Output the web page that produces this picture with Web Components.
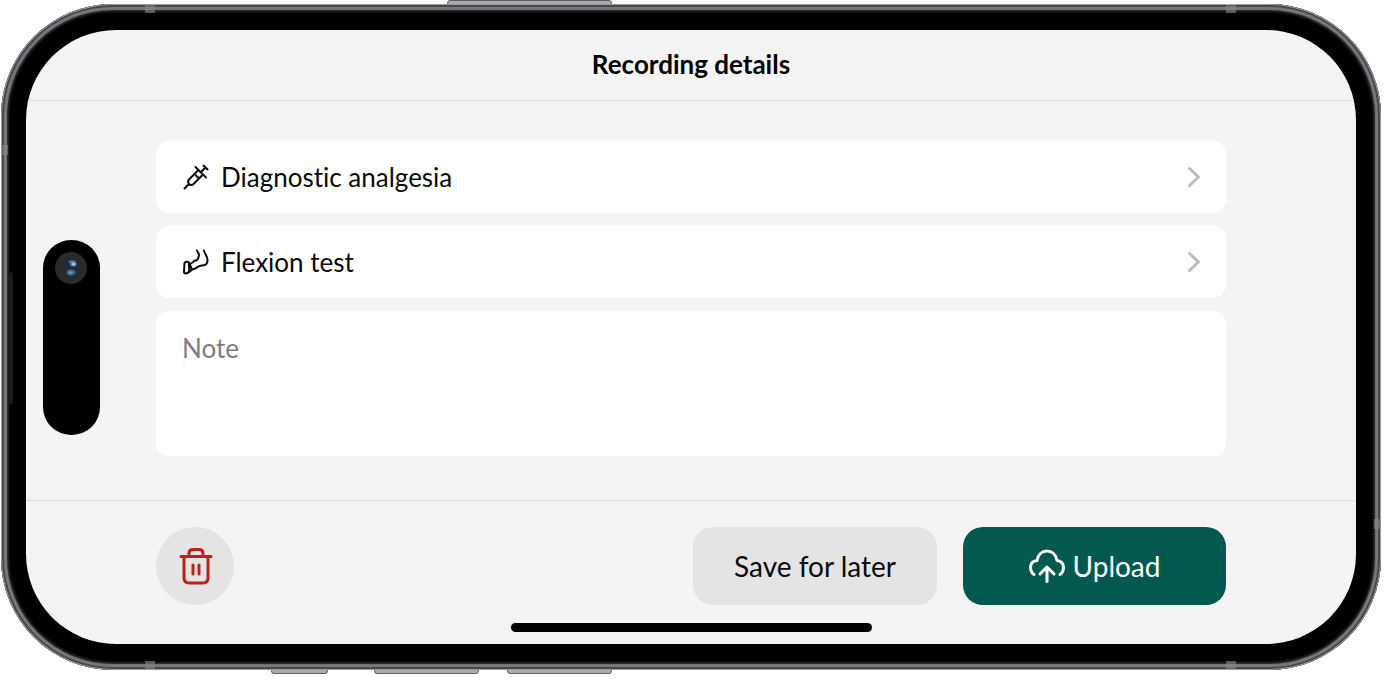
<!DOCTYPE html>
<html lang="en">
<head>
<meta charset="utf-8">
<meta name="viewport" content="width=device-width, initial-scale=1">
<title>Recording details</title>
<style>
  body {
    margin: 0;
    background: #fff;
    color: #0b0b0b;
    font-family: Lato, "Liberation Sans", sans-serif;
    font-variant-ligatures: none;
  }
</style>
</head>
<body>

<phone-frame>
  <recording-details>
    <detail-row>
      <svg slot="icon" viewBox="0 0 26 26" width="26" height="26" fill="none" stroke="currentColor" stroke-width="2" stroke-linecap="round" stroke-linejoin="round" aria-hidden="true">
        <path d="M1.500 24.500L6 20M12.500 3L23 13.500M20.500 1.500l4 4M22.500 3.500L18.500 7.500M15.500 6L6 15.500c-1.300 1.500-1 3.300 0 4.500 1.200 1 3 1.300 4.500 0L20 10.500M13 11.500l2 2"/>
      </svg>
      Diagnostic analgesia
    </detail-row>
    <detail-row>
      <svg slot="icon" viewBox="0 0 26 26" width="26" height="26" fill="none" stroke="currentColor" stroke-width="2" stroke-linecap="round" stroke-linejoin="round" aria-hidden="true">
        <path d="M14 1.500c.8 2 2.300 3 2 5-.3 2-1.200 4-2.500 4.800-1.500.5-2.500.2-3.500 1.700-.8 1-1.800 1.500-3 1.700M21 1.500c.3 3 3.500 5.500 3.500 9.500 0 3.500-1.500 5-4 5.300-3 .4-4.500.2-6 1.700-1.500 1.500-3 1.700-5 2.500"/>
        <path d="M1.500 14c1-1 3-1.300 4.300-.8 1.200 2 2.200 4.500 3 7.300-1.500 2.200-3.800 3.700-6.300 4-1 .1-1.500-.5-1.500-1.500zM6 13.500c-.6 3 .8 6 0 9"/>
      </svg>
      Flexion test
    </detail-row>
    <note-field></note-field>

    <icon-button slot="actions" label="Delete recording"></icon-button>
    <action-button slot="actions">Save for later</action-button>
    <action-button slot="actions" primary>
      <svg slot="icon" viewBox="0 0 36 34" width="36" height="34" fill="none" stroke="currentColor" stroke-width="3" stroke-linecap="round" stroke-linejoin="round" aria-hidden="true">
        <path d="M5 25.500C2.800 24 1.500 21.500 1.500 18.500c0-4 2.700-6.500 6.500-7C9 5.500 13 2 18 2s9 3.500 10 9.500c3.800.5 6.500 3 6.500 7 0 3-1.300 5.500-3.500 7M18 32.500V18M11 25l7-7 7 7"/>
      </svg>
      Upload
    </action-button>
  </recording-details>
</phone-frame>

<script>
class PhoneFrame extends HTMLElement {

  constructor() {
    super();
    this.attachShadow({ mode: "open" });
  }

  getTemplate() {
    const template = document.createElement("template");

    template.innerHTML = `
      ${this.getStyles()}
      <i class="key top"></i>
      <i class="key mute"></i>
      <i class="key up"></i>
      <i class="key down"></i>
      <div class="body">
        <i class="band b1"></i><i class="band b2"></i>
        <i class="band b3"></i><i class="band b4"></i>
        <i class="band side left"></i><i class="band side right"></i>
        <i class="sensor"></i>
        <div class="screen">
          <slot></slot>
        </div>
        <div class="island">
          <svg viewBox="0 0 32 32" width="32" height="32" aria-hidden="true">
            <circle cx="16" cy="16" r="16" fill="#2a2b2d"/>
            <circle cx="16" cy="16" r="9" fill="#222b35"/>
            <path d="M13 10c3-3 8-2 8.500 1.500S18 15 16 14s1-3-3-4z" fill="#56789a"/>
            <ellipse cx="18.500" cy="12" rx="2" ry="1.500" fill="#a3c6df"/>
            <ellipse cx="16" cy="20.500" rx="4.500" ry="3" fill="#466784"/>
            <ellipse cx="15.500" cy="20.500" rx="2" ry="1.300" fill="#7095b3"/>
          </svg>
        </div>
        <div class="home"></div>
      </div>
    `;

    return template;
  }

  getStyles() {
    return `
      <style>
        :host {
          display: flex;
          position: relative;
          box-sizing: border-box;
          min-height: 100vh;
          padding: 4px 17px 12px 1px;
        }
        .body {
          position: relative;
          flex: 1;
          display: flex;
          padding: 26px 25px;
          border-radius: 112px;
          background: #000;
          box-shadow:
            inset 0 0 0 1px #9a9b9d,
            inset 0 0 0 3px #46484b,
            inset 0 0 1px 6px #77797c,
            inset 0 0 2px 8px #252628;
        }
        .screen {
          flex: 1;
          display: flex;
          overflow: hidden;
          border-radius: 90px;
          background: #f4f4f4;
        }
        .island {
          position: absolute;
          left: 42px;
          top: 236px;
          box-sizing: border-box;
          width: 57px;
          height: 195px;
          padding: 12px;
          border-radius: 28px;
          background: #000;
        }
        .home {
          position: absolute;
          left: 50%;
          bottom: 38px;
          width: 361px;
          height: 9px;
          margin-left: -180px;
          border-radius: 5px;
          background: #000;
        }
        .key {
          position: absolute;
          box-sizing: border-box;
          height: 6px;
          border: 1px solid #5c5e60;
          border-radius: 3px;
          background: #a9abad;
        }
        .top { left: 447px; top: 0; width: 165px; }
        .mute { left: 271px; bottom: 8px; width: 57px; }
        .up { left: 374px; bottom: 8px; width: 105px; }
        .down { left: 507px; bottom: 8px; width: 105px; }
        .band {
          position: absolute;
          width: 10px;
          height: 8px;
          background: #88888a99;
        }
        .b1, .b3 { left: 144px; }
        .b2, .b4 { right: 145px; }
        .b1, .b2 { top: 1px; }
        .b3, .b4 { bottom: 1px; }
        .side { width: 7px; height: 10px; }
        .left { left: 0; top: 141px; }
        .right { right: 0; bottom: 141px; }
        .sensor {
          position: absolute;
          left: 8px;
          top: 268px;
          width: 4px;
          height: 132px;
          border-radius: 2px;
          background: #1b1b1c;
        }
      </style>
    `;
  }

  connectedCallback() {
    this.shadowRoot.appendChild(this.getTemplate().content.cloneNode(true));
  }

}

class RecordingDetails extends HTMLElement {

  constructor() {
    super();
    this.attachShadow({ mode: "open" });
  }

  getTemplate() {
    const template = document.createElement("template");

    template.innerHTML = `
      ${this.getStyles()}
      <header>
        <h1>Recording details</h1>
      </header>
      <main>
        <slot></slot>
      </main>
      <footer>
        <slot name="actions"></slot>
      </footer>
    `;

    return template;
  }

  getStyles() {
    return `
      <style>
        :host {
          flex: 1;
          display: flex;
          flex-direction: column;
        }
        header {
          padding: 17px 130px 19px;
          border-bottom: 1px solid #dcdcdc;
        }
        h1 {
          margin: 0;
          font-size: 26px;
          line-height: 34px;
          text-align: center;
          color: #000;
        }
        main {
          flex: 1;
          display: flex;
          flex-direction: column;
          gap: 13px;
          padding: 40px 130px 44px;
        }
        footer {
          display: flex;
          gap: 26px;
          padding: 26px 130px 39px;
          border-top: 1px solid #dcdcdc;
        }
      </style>
    `;
  }

  connectedCallback() {
    this.shadowRoot.appendChild(this.getTemplate().content.cloneNode(true));
  }

}

class DetailRow extends HTMLElement {

  constructor() {
    super();
    this.attachShadow({ mode: "open" });
  }

  getTemplate() {
    const template = document.createElement("template");

    template.innerHTML = `
      ${this.getStyles()}
      <button type="button">
        <slot name="icon"></slot>
        <span><slot></slot></span>
        <svg viewBox="0 0 14 22" width="14" height="22" fill="none" stroke="#bcbcbc" stroke-width="3" stroke-linecap="round" stroke-linejoin="round" aria-hidden="true">
          <path d="M2.500 2.500l9 8.500-9 8.500"/>
        </svg>
      </button>
    `;

    return template;
  }

  getStyles() {
    return `
      <style>
        :host {
          display: block;
        }
        button {
          display: flex;
          align-items: center;
          gap: 12px;
          width: 100%;
          min-height: 72px;
          padding: 0 25px 0 27px;
          border: 0;
          border-radius: 13px;
          background: #fff;
          color: inherit;
          font: inherit;
          font-size: 26px;
          font-variant-ligatures: none;
          line-height: 34px;
          text-align: left;
        }
        span {
          flex: 1;
        }
      </style>
    `;
  }

  connectedCallback() {
    this.shadowRoot.appendChild(this.getTemplate().content.cloneNode(true));
  }

}

class NoteField extends HTMLElement {

  constructor() {
    super();
    this.attachShadow({ mode: "open" });
  }

  getTemplate() {
    const template = document.createElement("template");

    template.innerHTML = `
      ${this.getStyles()}
      <textarea placeholder="Note" aria-label="Note"></textarea>
    `;

    return template;
  }

  getStyles() {
    return `
      <style>
        :host {
          flex: 1;
          display: flex;
        }
        textarea {
          flex: 1;
          box-sizing: border-box;
          min-height: 145px;
          padding: 20px 26px;
          border: 0;
          border-radius: 13px;
          background: #fff;
          color: inherit;
          font: inherit;
          font-size: 26px;
          line-height: 34px;
          resize: none;
        }
        textarea::placeholder {
          color: #7d7d7d;
        }
      </style>
    `;
  }

  connectedCallback() {
    this.shadowRoot.appendChild(this.getTemplate().content.cloneNode(true));
  }

}

class IconButton extends HTMLElement {

  constructor() {
    super();
    this.attachShadow({ mode: "open" });
  }

  getTemplate() {
    const template = document.createElement("template");

    template.innerHTML = `
      ${this.getStyles()}
      <button type="button" aria-label="${this.getAttribute("label")}">
        <svg viewBox="0 0 34 38" width="34" height="38" fill="none" stroke="currentColor" stroke-width="3" stroke-linecap="round" stroke-linejoin="round" aria-hidden="true">
          <path d="M3 9.500h30M6 9.500v21q0 5.500 5 5.500h14q5 0 5-5.500v-21M11 9.500V6.500q0-4 4-4h6q4 0 4 4v3M15 18v9M21 18v9"/>
        </svg>
      </button>
    `;

    return template;
  }

  getStyles() {
    return `
      <style>
        :host {
          display: block;
          margin-right: auto;
        }
        button {
          display: flex;
          align-items: center;
          justify-content: center;
          width: 78px;
          height: 78px;
          padding: 0;
          border: 0;
          border-radius: 50%;
          background: #e4e4e4;
          color: #b8241b;
        }
        svg {
          overflow: visible;
        }
      </style>
    `;
  }

  connectedCallback() {
    this.shadowRoot.appendChild(this.getTemplate().content.cloneNode(true));
  }

}

class ActionButton extends HTMLElement {

  constructor() {
    super();
    this.attachShadow({ mode: "open" });
  }

  getTemplate() {
    const template = document.createElement("template");

    template.innerHTML = `
      ${this.getStyles()}
      <button type="button">
        <slot name="icon"></slot>
        <span><slot></slot></span>
      </button>
    `;

    return template;
  }

  getStyles() {
    return `
      <style>
        :host {
          display: block;
        }
        button {
          display: flex;
          align-items: center;
          justify-content: center;
          min-width: 244px;
          height: 78px;
          padding: 0 38px;
          border: 0;
          border-radius: 20px;
          background: #e4e4e4;
          color: inherit;
          font: inherit;
          font-size: 28px;
          line-height: 36px;
        }
        :host([primary]) button {
          gap: 8px;
          min-width: 263px;
          background: #03594e;
          color: #fff;
        }
      </style>
    `;
  }

  connectedCallback() {
    this.shadowRoot.appendChild(this.getTemplate().content.cloneNode(true));
  }

}

customElements.define("phone-frame", PhoneFrame);
customElements.define("recording-details", RecordingDetails);
customElements.define("detail-row", DetailRow);
customElements.define("note-field", NoteField);
customElements.define("icon-button", IconButton);
customElements.define("action-button", ActionButton);
</script>
</body>
</html>
